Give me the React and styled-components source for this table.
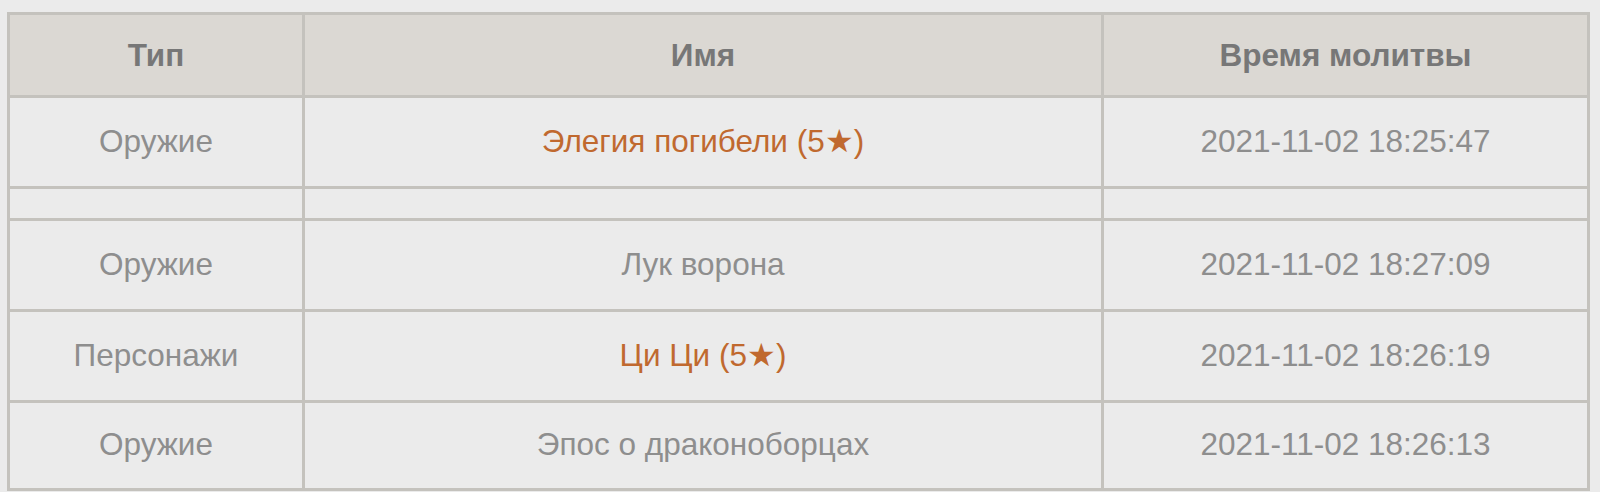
import React from "react";
import styled, { createGlobalStyle } from "styled-components";

const rows = [
  { type: "Оружие", name: "Элегия погибели (5★)", time: "2021-11-02 18:25:47", rare: true },
  { empty: true },
  { type: "Оружие", name: "Лук ворона", time: "2021-11-02 18:27:09" },
  { type: "Персонажи", name: "Ци Ци (5★)", time: "2021-11-02 18:26:19", rare: true },
  { type: "Оружие", name: "Эпос о драконоборцах", time: "2021-11-02 18:26:13", last: true },
];

export default function App() {
  return (
    <>
      <GlobalStyle />
      <Page>
        <Table>
          <colgroup>
            <col style={{ width: 295 }} />
            <col style={{ width: 799 }} />
            <col style={{ width: 486 }} />
          </colgroup>
          <thead>
            <tr>
              <HeadCell>Тип</HeadCell>
              <HeadCell>Имя</HeadCell>
              <HeadCell>Время молитвы</HeadCell>
            </tr>
          </thead>
          <tbody>
            {rows.map((r, i) =>
              r.empty ? (
                <Row key={i} $height={32}>
                  <Cell />
                  <Cell />
                  <Cell />
                </Row>
              ) : (
                <Row key={i} $height={r.last ? 88 : 91}>
                  <Cell>{r.type}</Cell>
                  <Cell $rare={r.rare}>{r.name}</Cell>
                  <Cell>{r.time}</Cell>
                </Row>
              )
            )}
          </tbody>
        </Table>
      </Page>
    </>
  );
}

const GlobalStyle = createGlobalStyle`
  html, body {
    margin: 0;
    background: #ebebeb;
  }
`;

const Page = styled.div`
  padding: 12px 0 0 7px;
  font-family: "Liberation Sans", Arial, sans-serif;
`;

const Table = styled.table`
  width: 1583px;
  table-layout: fixed;
  border-collapse: separate;
  border-spacing: 0;
  border-left: 3px solid #c4c2bd;
  border-top: 3px solid #c4c2bd;
  background: #ebebeb;
`;

const HeadCell = styled.th`
  box-sizing: border-box;
  height: 83px;
  padding: 0;
  background: #dbd8d3;
  border-right: 3px solid #c4c2bd;
  border-bottom: 3px solid #c4c2bd;
  color: #777777;
  font-size: 31.5px;
  font-weight: bold;
  text-align: center;
  vertical-align: middle;
`;

const Row = styled.tr`
  height: ${({ $height }) => $height}px;
`;

const Cell = styled.td`
  box-sizing: border-box;
  padding: 0 0 2px;
  border-right: 3px solid #c4c2bd;
  border-bottom: 3px solid #c4c2bd;
  color: ${({ $rare }) => ($rare ? "#c0692f" : "#8e8e8e")};
  font-size: 31.5px;
  text-align: center;
  vertical-align: middle;
`;
